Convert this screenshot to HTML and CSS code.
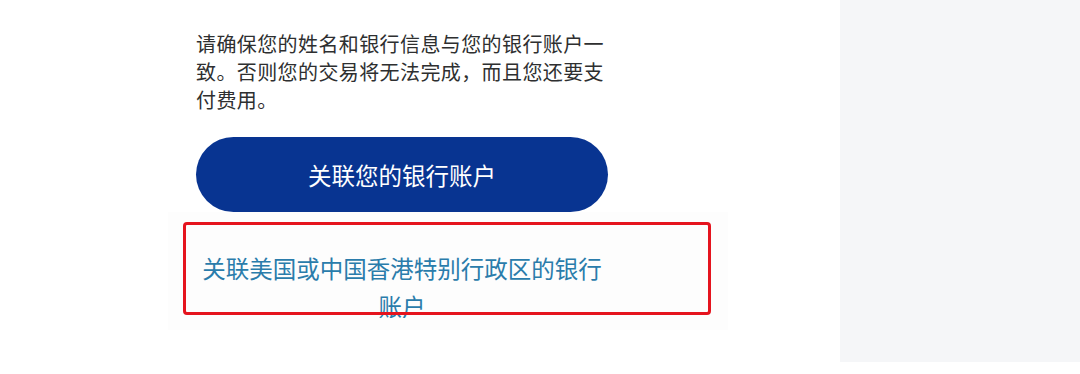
FILE: index.html
```html
<!DOCTYPE html>
<html lang="zh-CN">
<head>
<meta charset="utf-8">
<title>关联您的银行账户</title>
<link rel="stylesheet" href="styles.css">
</head>
<body>
<div class="page">
  <main class="main">
    <div class="column">
      <p class="notice">请确保您的姓名和银行信息与您的银行账户一致。否则您的交易将无法完成，而且您还要支付费用。</p>
      <button class="primary" type="button">关联您的银行账户</button>
      <div class="linkcard">
        <div class="linkclip">
          <a class="link" href="#">关联美国或中国香港特别行政区的银行账户</a>
        </div>
        <div class="highlight"></div>
      </div>
    </div>
  </main>
  <aside class="side"></aside>
</div>
</body>
</html>
```

FILE: styles.css
```css
html, body {
  margin: 0;
  padding: 0;
  background: #ffffff;
}
body {
  font-family: "Noto Sans CJK SC", "Noto Sans", "Liberation Sans", sans-serif;
  width: 1080px;
  height: 374px;
  overflow: hidden;
}
.page {
  display: flex;
  align-items: flex-start;
}
.main {
  width: 840px;
}
.column {
  width: 412px;
  margin-left: 196px;
  display: flex;
  flex-direction: column;
}
.notice {
  margin: 30px 0 0 0;
  font-size: 20px;
  letter-spacing: 0.4px;
  line-height: 28px;
  color: #2e2f30;
}
.primary {
  margin-top: 23px;
  height: 75px;
  width: 412px;
  border: none;
  border-radius: 38px;
  background: #083491;
  color: #ffffff;
  font-family: inherit;
  font-size: 23.5px;
  font-weight: 400;
  padding: 0;
  display: flex;
  align-items: center;
  justify-content: center;
}
.linkcard {
  position: relative;
  margin-left: -28px;
  width: 560px;
  height: 118px;
  background: #fdfdfd;
}
.linkclip {
  margin-left: 28px;
  width: 412px;
  height: 106px;
  padding-top: 37px;
  box-sizing: border-box;
  overflow: hidden;
  text-align: center;
}
.link {
  font-size: 23.5px;
  line-height: 38px;
  color: #2a7cab;
  text-decoration: none;
}
.highlight {
  position: absolute;
  left: 15px;
  top: 10px;
  width: 528px;
  height: 93px;
  box-sizing: border-box;
  border: 3px solid #e5141e;
  border-radius: 4px;
}
.side {
  width: 240px;
  height: 362px;
  background: #f5f6f8;
}
```
